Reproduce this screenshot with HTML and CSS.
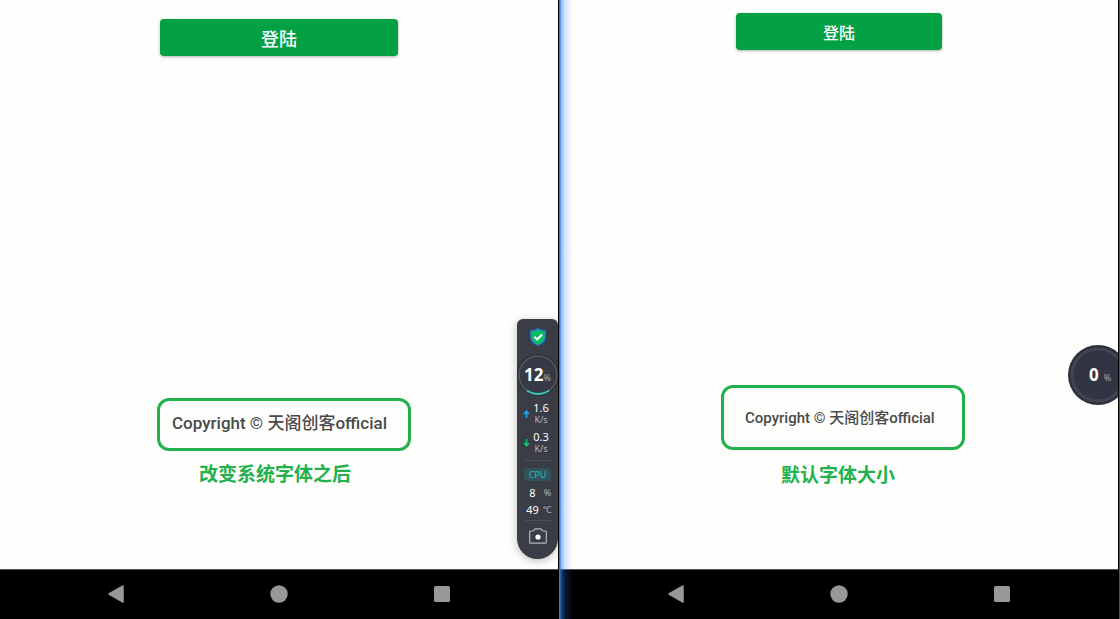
FILE: index.html
```html
<!DOCTYPE html>
<html lang="zh-CN">
<head>
<meta charset="utf-8">
<meta name="viewport" content="width=device-width, initial-scale=1">
<title>登陆</title>
<link rel="stylesheet" href="styles.css">
</head>
<body>
<div class="screens">
  <section class="screen screen-large">
    <main class="content">
      <button class="login" type="button">登陆</button>
      <div class="notes">
        <p class="copyright">Copyright © 天阁创客official</p>
        <p class="caption">改变系统字体之后</p>
      </div>
      <aside class="monitor">
        <svg class="shield" viewBox="0 0 16 18" aria-hidden="true">
          <path d="M8 .7C6 2 3.500 2.800 .8 2.900V9c0 4 3 6.600 7.200 8.300C12.200 15.600 15.200 13 15.200 9V2.900C12.500 2.800 10 2 8 .7Z" fill="#06bd62" stroke="#2878df" stroke-width="1.200"/>
          <path d="M4.300 8.800 7.200 11.500 12 6.500" fill="none" stroke="#fff" stroke-width="2.200"/>
        </svg>
        <div class="gauge">
          <svg class="gauge-ring" viewBox="0 0 42 42" aria-hidden="true">
            <circle cx="21" cy="21" r="21" fill="#2b2e38"/>
            <circle cx="21" cy="21" r="19" fill="#373a46" stroke="#555862" stroke-width="1.500"/>
            <path d="M10 36.500A19 19 0 0 0 32 36.500" fill="none" stroke="#36c5ad" stroke-width="2"/>
          </svg>
          <span class="gauge-text"><b>12</b><small>%</small></span>
        </div>
        <div class="rate">
          <svg class="arrow" viewBox="0 0 7 8" aria-hidden="true"><path d="M3.500 0 7 4H4.300V8H2.700V4H0Z" fill="#1ca4f4"/></svg>
          <span class="rate-text"><span class="value">1.6</span><span class="unit">K/s</span></span>
        </div>
        <div class="rate rate-down">
          <svg class="arrow" viewBox="0 0 7 8" aria-hidden="true"><path d="M3.500 8 0 4H2.700V0H4.300V4H7Z" fill="#0bc767"/></svg>
          <span class="rate-text"><span class="value">0.3</span><span class="unit">K/s</span></span>
        </div>
        <div class="divider"></div>
        <span class="cpu">CPU</span>
        <div class="reading"><span class="value">8</span><span class="unit">%</span></div>
        <div class="reading"><span class="value">49</span><span class="unit">℃</span></div>
        <div class="divider"></div>
        <button class="camera" type="button" aria-label="截图">
          <svg viewBox="0 0 18 16" aria-hidden="true">
            <path d="M1.500 3H4.300L6 .8h6L13.700 3h2.800q.8 0 .8.800V14.400q0 .8-.8.800H1.500q-.8 0-.8-.8V3.800Q.7 3 1.500 3Z" fill="none" stroke="#b5b6ba" stroke-width="1.200"/>
            <circle cx="9" cy="9" r="2.600" fill="#fff"/>
          </svg>
        </button>
      </aside>
    </main>
    <nav class="system-nav" aria-label="系统导航">
      <button type="button" aria-label="返回"><svg viewBox="0 0 18 18" aria-hidden="true"><path d="M16 1V17L2 9Z" fill="#999896" stroke="#999896" stroke-width="1.500" stroke-linejoin="round"/></svg></button>
      <button type="button" aria-label="主页"><svg viewBox="0 0 18 18" aria-hidden="true"><circle cx="9" cy="9" r="8.700" fill="#999896"/></svg></button>
      <button type="button" aria-label="最近任务"><svg viewBox="0 0 18 18" aria-hidden="true"><rect x="1" y="1" width="16" height="16" rx="1.500" fill="#999896"/></svg></button>
    </nav>
  </section>

  <section class="screen screen-default">
    <main class="content">
      <button class="login" type="button">登陆</button>
      <div class="notes">
        <p class="copyright">Copyright © 天阁创客official</p>
        <p class="caption">默认字体大小</p>
      </div>
      <aside class="ball">
        <svg class="gauge-ring" viewBox="0 0 60 60" aria-hidden="true">
          <circle cx="30" cy="30" r="30" fill="#2d303d"/>
          <circle cx="30" cy="30" r="26" fill="#313543" stroke="#414552" stroke-width="3"/>
        </svg>
        <span class="ball-text"><b>0</b><small>%</small></span>
      </aside>
    </main>
    <nav class="system-nav" aria-label="系统导航">
      <button type="button" aria-label="返回"><svg viewBox="0 0 18 18" aria-hidden="true"><path d="M16 1V17L2 9Z" fill="#999896" stroke="#999896" stroke-width="1.500" stroke-linejoin="round"/></svg></button>
      <button type="button" aria-label="主页"><svg viewBox="0 0 18 18" aria-hidden="true"><circle cx="9" cy="9" r="8.700" fill="#999896"/></svg></button>
      <button type="button" aria-label="最近任务"><svg viewBox="0 0 18 18" aria-hidden="true"><rect x="1" y="1" width="16" height="16" rx="1.500" fill="#999896"/></svg></button>
    </nav>
  </section>
</div>
</body>
</html>
```

FILE: styles.css
```css
* {
  box-sizing: border-box;
}

body {
  margin: 0;
  background: #000;
  font-family: Roboto, "Noto Sans CJK SC", sans-serif;
}

button {
  padding: 0;
  border: 0;
  background: none;
  color: inherit;
  font: inherit;
  cursor: pointer;
}

svg {
  display: block;
}

p {
  margin: 0;
}

.screens {
  display: grid;
  grid-template-columns: 1fr 1fr;
  min-height: 100vh;
}

.screen {
  position: relative;
  display: flex;
  flex-direction: column;
  background: #000;
}

.screen-large {
  border-right: 2px solid #000;
}

.screen-default {
  padding-right: 1px;
  border-right: 1px solid #555;
}

/* Blue glow along the seam between the two screens */
.screen-default::before {
  content: "";
  position: absolute;
  top: 0;
  bottom: 0;
  left: -1px;
  z-index: 2;
  width: 14px;
  background: linear-gradient(to right, #3576d2 0 1px, rgba(45, 125, 245, .55) 2px, rgba(45, 125, 245, .2) 6px, rgba(45, 125, 245, 0));
  pointer-events: none;
}

.content {
  position: relative;
  display: flex;
  flex: 1;
  flex-direction: column;
  align-items: center;
  overflow: hidden;
  background: #fefefd;
}

.login {
  border-radius: 4px;
  background: #04a044;
  box-shadow: 0 1px 3px rgba(0, 0, 0, .3);
  color: #fff;
  font-weight: 500;
}

.screen-large .login {
  width: 238px;
  height: 37px;
  margin-top: 19px;
  font-size: 18px;
}

.screen-default .login {
  width: 206px;
  height: 37px;
  margin-top: 13px;
  font-size: 16px;
}

.notes {
  display: flex;
  flex-direction: column;
  align-items: center;
  margin-top: auto;
}

.screen-large .notes {
  gap: 10px;
  padding: 0 0 80px 10px;
}

.screen-default .notes {
  gap: 12px;
  padding: 0 0 79px 8px;
}

.copyright {
  border: 3px solid #22b14c;
  border-radius: 12px;
  color: #4a4a4a;
  font-weight: 500;
  line-height: 24px;
  white-space: nowrap;
}

.screen-large .copyright {
  width: 254px;
  padding: 10px 12px 13px;
  font-size: 17px;
}

.screen-default .copyright {
  width: 244px;
  padding: 18px 21px 17px;
  font-size: 15px;
}

.caption {
  color: #22b14c;
  font-size: 19px;
  font-weight: 700;
  line-height: 28px;
}

.screen-large .caption {
  margin-right: 18px;
}

.screen-default .caption {
  margin-right: 10px;
}

.monitor {
  position: absolute;
  right: 0;
  bottom: 10px;
  display: flex;
  flex-direction: column;
  align-items: center;
  width: 41px;
  padding: 9px 0 15px;
  border-radius: 6px 6px 21px 21px;
  background: #3a3c46;
  box-shadow: 0 2px 10px rgba(0, 0, 0, .25);
  color: #fff;
  font-family: "Noto Sans", sans-serif;
}

.shield {
  width: 16px;
  height: 18px;
}

.gauge {
  display: grid;
  place-items: center;
  width: 42px;
  height: 42px;
  margin: 8px 0 6px;
}

.gauge > *,
.ball > * {
  grid-area: 1 / 1;
}

.gauge-ring {
  width: 100%;
  height: 100%;
}

.gauge-text,
.ball-text {
  z-index: 1;
  display: flex;
  align-items: baseline;
}

.gauge-text b,
.ball-text b {
  font-size: 17px;
  line-height: 20px;
}

.gauge-text small,
.ball-text small {
  color: #aaabb0;
  font-size: 9px;
}

.rate {
  display: flex;
  gap: 3px;
  align-items: center;
  margin-right: 3px;
}

.rate-down {
  margin-top: 6px;
  margin-bottom: 6px;
}

.arrow {
  width: 7px;
  height: 8px;
}

.rate-text {
  display: flex;
  flex-direction: column;
  align-items: center;
}

.value {
  font-size: 11px;
  line-height: 12px;
}

.unit {
  color: #b5b6bb;
  font-size: 9px;
  line-height: 11px;
}

.divider {
  width: 26px;
  height: 1px;
  background: #46535d;
}

.cpu {
  margin: 7px 0 3px;
  padding: 0 5px;
  border-radius: 3px;
  background: #32535a;
  color: #1bc3b0;
  font-size: 9px;
  line-height: 13px;
}

.reading {
  display: grid;
  grid-template-columns: 14px 10px;
  gap: 3px;
  align-items: center;
  justify-items: center;
  height: 17px;
  margin-left: 3px;
}

.reading + .divider {
  margin: 2px 0 7px;
}

.camera {
  width: 18px;
  height: 16px;
}

.ball {
  position: absolute;
  right: -10px;
  bottom: 164px;
  display: grid;
  place-items: center;
  width: 60px;
  height: 60px;
  color: #fff;
  font-family: "Noto Sans", sans-serif;
}

.ball-text {
  gap: 5px;
  padding-left: 4px;
}

.system-nav {
  display: grid;
  grid-template-columns: repeat(3, 1fr);
  place-items: center;
  height: 50px;
  padding: 0 35px 1px 34px;
  border-top: 1px solid #555;
  background: #000;
}

.system-nav svg {
  width: 18px;
  height: 18px;
}
```
